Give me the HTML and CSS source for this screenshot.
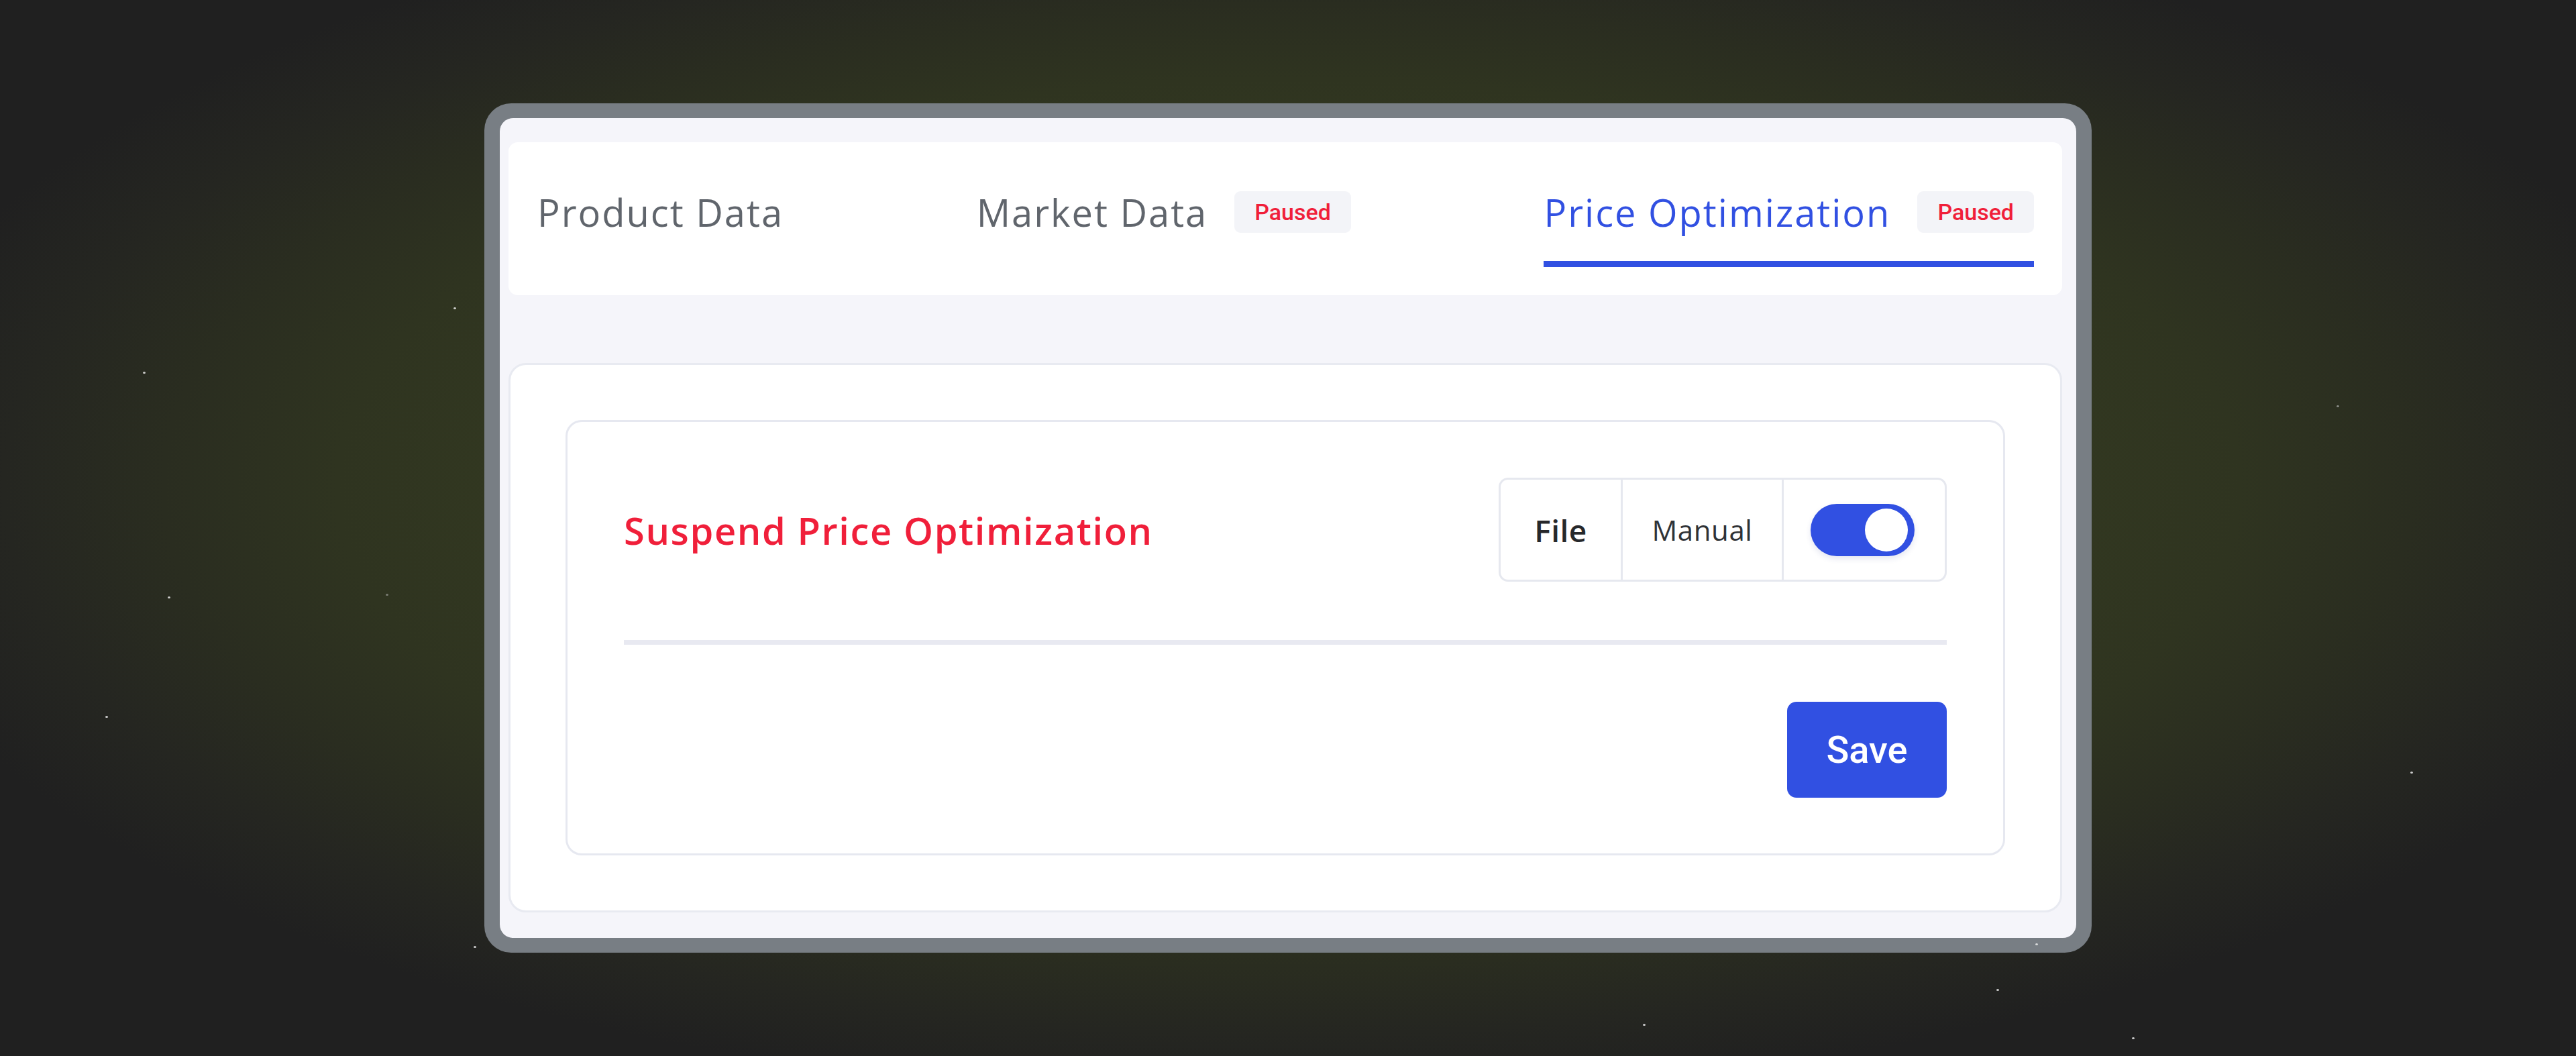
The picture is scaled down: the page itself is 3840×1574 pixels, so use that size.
FILE: index.html
```html
<!DOCTYPE html>
<html lang="en">
<head>
<meta charset="utf-8">
<title>Price Optimization</title>
<link rel="stylesheet" href="styles.css">
</head>
<body>
<div class="stage">
  <span class="star s1"></span>
  <span class="star s2"></span>
  <span class="star s3"></span>
  <span class="star s4"></span>
  <span class="star s5"></span>
  <span class="star s6"></span>
  <span class="star s7"></span>
  <span class="star s8"></span>
  <span class="star s9"></span>
  <span class="star s10"></span>
  <span class="star s11"></span>
  <span class="star s12"></span>

  <div class="device">
    <div class="screen">
      <nav class="tabs">
        <div class="tab">
          <div class="tab-row"><span class="tab-label">Product Data</span></div>
        </div>
        <div class="tab">
          <div class="tab-row"><span class="tab-label">Market Data</span><span class="badge">Paused</span></div>
        </div>
        <div class="tab active">
          <div class="tab-row"><span class="tab-label">Price Optimization</span><span class="badge">Paused</span></div>
        </div>
      </nav>

      <section class="panel">
        <div class="setting">
          <div class="setting-head">
            <h2 class="setting-title">Suspend Price Optimization</h2>
            <div class="seg">
              <div class="seg-item seg-file">File</div>
              <div class="seg-item seg-manual">Manual</div>
              <div class="seg-item seg-toggle"><span class="switch"><span class="knob"></span></span></div>
            </div>
          </div>
          <hr class="divider">
          <div class="actions"><button class="btn-save" type="button">Save</button></div>
        </div>
      </section>
    </div>
  </div>
</div>
</body>
</html>
```

FILE: styles.css
```css
html, body {
  margin: 0;
  padding: 0;
}

body {
  background: #202020;
  font-family: "Open Sans", "Noto Sans", sans-serif;
}

.stage {
  position: relative;
  width: 3840px;
  height: 1574px;
  box-sizing: border-box;
  padding-top: 154px;
  display: flex;
  justify-content: center;
  align-items: flex-start;
  overflow: hidden;
  background:
    radial-gradient(ellipse 2150px 920px at 50% 46%,
      #343a22 0%,
      #333921 50%,
      #2f3420 66%,
      #2a2d20 78%,
      #252621 89%,
      #202020 100%);
}

.star {
  position: absolute;
  width: 4px;
  height: 3px;
  border-radius: 50%;
  background: rgba(235, 235, 235, 0.85);
}
.s1 { left: 213px; top: 554px; }
.s2 { left: 250px; top: 889px; }
.s3 { left: 157px; top: 1067px; }
.s4 { left: 676px; top: 458px; }
.s5 { left: 575px; top: 885px; background: rgba(200, 200, 200, 0.5); }
.s6 { left: 706px; top: 1410px; }
.s7 { left: 3483px; top: 604px; background: rgba(200, 200, 200, 0.6); }
.s8 { left: 3593px; top: 1150px; }
.s9 { left: 3178px; top: 1546px; }
.s10 { left: 3034px; top: 1406px; }
.s11 { left: 2976px; top: 1474px; }
.s12 { left: 2449px; top: 1526px; }

.device {
  width: 2396px;
  height: 1266px;
  box-sizing: border-box;
  padding: 22px 23px;
  background: #787e84;
  border-radius: 40px;
}

.screen {
  height: 100%;
  box-sizing: border-box;
  padding: 36px 21px 38px 13px;
  background: #f5f5fa;
  border-radius: 20px;
  display: flex;
  flex-direction: column;
}

/* Tabs */
.tabs {
  height: 228px;
  flex: none;
  box-sizing: border-box;
  padding: 73px 42px 0 43px;
  background: #ffffff;
  border-radius: 14px;
  display: flex;
  justify-content: space-between;
  align-items: flex-start;
}

.tab {
  padding-bottom: 42px;
  border-bottom: 9px solid transparent;
}

.tab.active {
  border-bottom-color: #3150e2;
}

.tab-row {
  height: 62px;
  display: flex;
  align-items: center;
  gap: 40px;
}

.tab-label {
  font-family: "Open Sans", sans-serif;
  font-size: 56px;
  font-weight: 400;
  letter-spacing: 2px;
  line-height: 1;
  color: #60656c;
  white-space: nowrap;
}

.tab.active .tab-label {
  color: #3150e2;
}

.badge {
  height: 62px;
  box-sizing: border-box;
  padding: 0 30px;
  display: flex;
  align-items: center;
  background: #f3f4f8;
  border-radius: 9px;
  font-family: Roboto, "Liberation Sans", sans-serif;
  font-weight: 500;
  font-size: 34px;
  color: #f01f3a;
}

/* Panel */
.panel {
  margin-top: 101px;
  flex: 1;
  box-sizing: border-box;
  padding: 82px;
  background: #ffffff;
  border: 3px solid #e8eaf1;
  border-radius: 26px;
}

.setting {
  box-sizing: border-box;
  padding: 83px 84px;
  border: 3px solid #e6e8f0;
  border-radius: 24px;
}

.setting-head {
  height: 155px;
  display: flex;
  justify-content: space-between;
  align-items: center;
}

.setting-title {
  margin: 0;
  font-family: "Open Sans", sans-serif;
  font-size: 56px;
  font-weight: 600;
  letter-spacing: 1.6px;
  line-height: 1;
  color: #f01f3a;
}

.seg {
  height: 155px;
  box-sizing: border-box;
  display: flex;
  border: 3px solid #e6e8ef;
  border-radius: 14px;
}

.seg-item {
  display: flex;
  align-items: center;
  justify-content: center;
  box-sizing: border-box;
}

.seg-file {
  width: 182px;
  border-right: 3px solid #e6e8ef;
  font-size: 46px;
  font-weight: 600;
  letter-spacing: 0.5px;
  color: #26282b;
}

.seg-manual {
  width: 240px;
  border-right: 3px solid #e6e8ef;
  font-size: 42px;
  font-weight: 400;
  letter-spacing: 0.6px;
  color: #2f3236;
}

.seg-toggle {
  width: 240px;
  justify-content: flex-start;
  padding-left: 40px;
}

.switch {
  width: 155px;
  height: 78px;
  box-sizing: border-box;
  padding: 7px 10px;
  display: flex;
  justify-content: flex-end;
  align-items: center;
  background: #3150e2;
  border-radius: 39px;
  box-shadow: 0 4px 8px rgba(40, 60, 140, 0.12);
}

.knob {
  width: 64px;
  height: 64px;
  border-radius: 50%;
  background: #ffffff;
}

.divider {
  height: 7px;
  margin: 87px 0 85px;
  border: none;
  background: #e8e9f1;
}

.actions {
  display: flex;
  justify-content: flex-end;
}

.btn-save {
  width: 238px;
  height: 143px;
  border: none;
  border-radius: 14px;
  background: #3150e2;
  color: #ffffff;
  font-family: Roboto, "Liberation Sans", sans-serif;
  font-size: 56px;
  font-weight: 500;
  padding: 0;
}
```
